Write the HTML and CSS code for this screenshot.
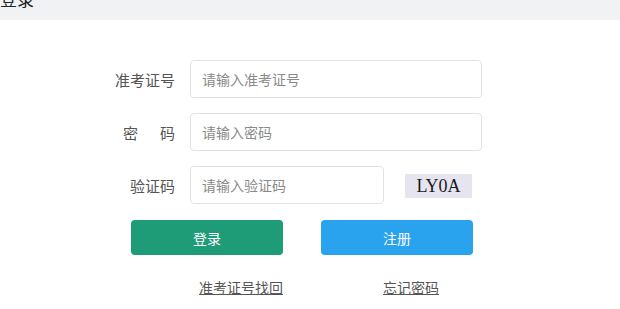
FILE: index.html
```html
<!DOCTYPE html>
<html lang="zh-CN">
<head>
  <meta charset="UTF-8" />
  <title>登录</title>
  <link rel="stylesheet" href="styles.css">
</head>
<body>
  <div class="topbar">
    <span class="title">登录</span>
  </div>

  <form class="login-form">
    <div class="row">
      <label for="ticket">准考证号</label>
      <input type="text" id="ticket" placeholder="请输入准考证号" />
    </div>
    <div class="row">
      <label for="pwd" class="spaced">密码</label>
      <input type="password" id="pwd" placeholder="请输入密码" />
    </div>
    <div class="row row-code">
      <label for="code">验证码</label>
      <input type="text" id="code" class="short" placeholder="请输入验证码" />
      <span class="captcha">LY0A</span>
    </div>

    <div class="buttons">
      <button type="button" class="btn btn-login">登录</button>
      <button type="button" class="btn btn-register">注册</button>
    </div>

    <div class="links">
      <a href="#" class="link-ticket">准考证号找回</a>
      <a href="#" class="link-pwd">忘记密码</a>
    </div>
  </form>
</body>
</html>
```

FILE: styles.css
```css
body {
  margin: 0;
  background: #fff;
  font-family: "Noto Sans CJK SC", "Noto Sans", sans-serif;
  color: #555;
}
.topbar {
  height: 20px;
  background: #f1f2f4;
  overflow: hidden;
}
.title {
  display: block;
  margin-top: -12px;
  font-size: 17px;
  line-height: 22px;
  color: #222;
}
.login-form {
  padding-top: 40px;
  padding-left: 100px;
}
.row {
  display: flex;
  align-items: center;
  margin-bottom: 15px;
}
.row-code {
  margin-top: 1px;
}
.row label {
  width: 75px;
  text-align: right;
  font-size: 15px;
  margin-right: 15px;
  color: #555;
}
.row label.spaced {
  letter-spacing: 22px;
  margin-right: -7px;
  width: 97px;
}
input {
  width: 292px;
  height: 38px;
  box-sizing: border-box;
  padding: 0 11px;
  border: 1px solid #e2e2e2;
  border-radius: 4px;
  font-family: inherit;
  font-size: 14px;
  color: #333;
}
input::placeholder {
  color: #8a8a8a;
}
input.short {
  width: 194px;
}
.captcha {
  margin-left: 21px;
  margin-top: 2px;
  width: 67px;
  height: 24px;
  line-height: 24px;
  text-align: center;
  background: #e6e4ef;
  font-family: "Liberation Serif", serif;
  font-size: 18px;
  color: #1a1a1a;
}
.buttons {
  display: flex;
  gap: 38px;
  margin-left: 31px;
  margin-top: 16px;
}
.btn {
  width: 152px;
  height: 35px;
  border: none;
  border-radius: 4px;
  color: #fff;
  font-family: inherit;
  font-size: 14px;
  cursor: pointer;
}
.btn-login {
  background: #1e9c77;
}
.btn-register {
  background: #2aa3ee;
}
.links {
  display: flex;
  margin-top: 22px;
  font-size: 14px;
}
.links a {
  color: #555;
  text-decoration: underline;
}
.link-ticket {
  margin-left: 99px;
}
.link-pwd {
  margin-left: 100px;
}
```
